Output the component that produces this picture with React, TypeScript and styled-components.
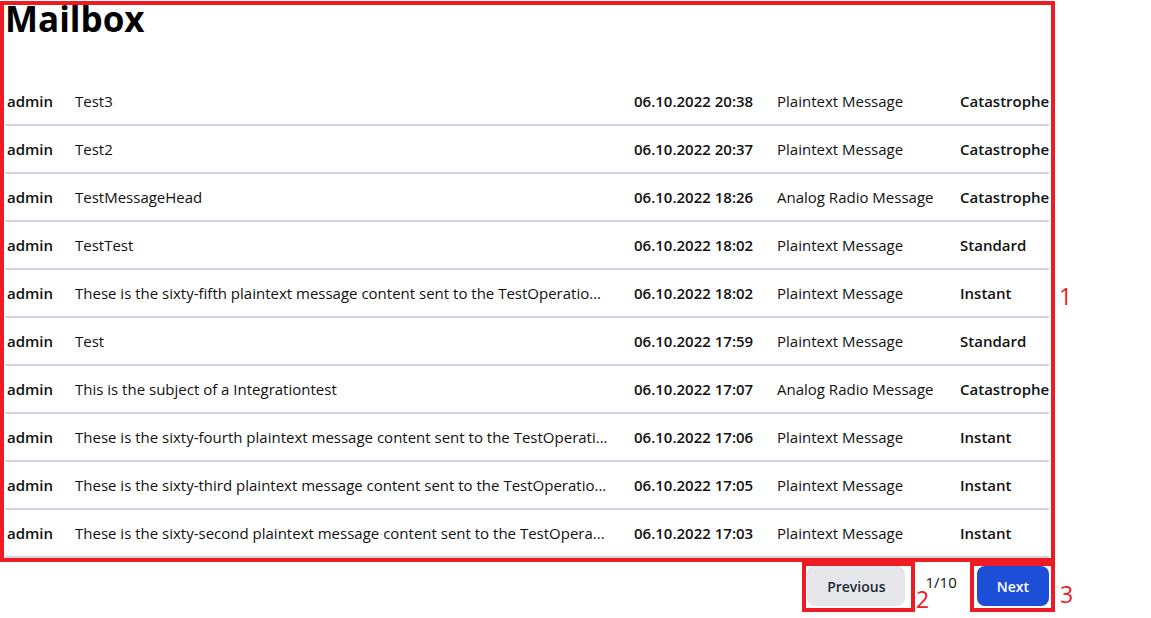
import React from "react";
import styled, { createGlobalStyle } from "styled-components";

const GlobalStyle = createGlobalStyle`
  html, body { margin: 0; padding: 0; background: #ffffff; }
  body { font-family: "Open Sans", "Noto Sans", "Liberation Sans", sans-serif; color: #000; }
`;

const Page = styled.div`
  position: relative;
  width: 1151px;
  height: 618px;
  overflow: hidden;
`;

const Container = styled.main`
  margin-left: 5px;
  width: 1044px;
  display: flex;
  flex-direction: column;
`;

const Title = styled.h1`
  margin: 0 0 40px 0;
  font-size: 35px;
  line-height: 38px;
  font-weight: 700;
  color: #000;
`;

const Table = styled.div`
  display: flex;
  flex-direction: column;
`;

const Row = styled.div`
  display: grid;
  grid-template-columns: 68px 559px 143px 183px 91px;
  height: 48px;
  box-sizing: border-box;
  border-bottom: 2px solid #d1d5db;
  align-items: center;
`;

const Cell = styled.div<{ $bold?: boolean }>`
  padding-left: 2px;
  font-size: 15px;
  line-height: 24px;
  font-weight: ${(p) => (p.$bold ? 600 : 400)};
  color: #111111;
  white-space: nowrap;
  overflow: hidden;
`;

const Pager = styled.div`
  display: flex;
  justify-content: flex-end;
  align-items: flex-start;
  gap: 20px;
  margin-top: 8px;
`;

const Button = styled.button<{ $primary?: boolean }>`
  height: 40px;
  padding: 0 20px;
  border: none;
  border-radius: 8px;
  font-family: inherit;
  font-size: 14px;
  font-weight: 600;
  background: ${(p) => (p.$primary ? "#1d4ed8" : "#e5e7eb")};
  color: ${(p) => (p.$primary ? "#ffffff" : "#1f2937")};
  cursor: pointer;
`;

const PageCount = styled.span`
  padding-top: 4px;
  font-size: 15px;
  line-height: 24px;
  color: #111111;
`;

const Mark = styled.div<{ $x: number; $y: number; $w: number; $h: number }>`
  position: absolute;
  left: ${(p) => p.$x}px;
  top: ${(p) => p.$y}px;
  width: ${(p) => p.$w}px;
  height: ${(p) => p.$h}px;
  box-sizing: border-box;
  border: 4px solid #ed1c24;
  pointer-events: none;
`;

const Label = styled.span<{ $x: number; $y: number }>`
  position: absolute;
  left: ${(p) => p.$x}px;
  top: ${(p) => p.$y}px;
  font-family: "Open Sans", "Liberation Sans", sans-serif;
  font-size: 23px;
  line-height: 24px;
  color: #ed1c24;
`;

type Msg = [string, string, string, string, string];

const rows: Msg[] = [
  ["admin", "Test3", "06.10.2022 20:38", "Plaintext Message", "Catastrophe"],
  ["admin", "Test2", "06.10.2022 20:37", "Plaintext Message", "Catastrophe"],
  ["admin", "TestMessageHead", "06.10.2022 18:26", "Analog Radio Message", "Catastrophe"],
  ["admin", "TestTest", "06.10.2022 18:02", "Plaintext Message", "Standard"],
  ["admin", "These is the sixty-fifth plaintext message content sent to the TestOperatio...", "06.10.2022 18:02", "Plaintext Message", "Instant"],
  ["admin", "Test", "06.10.2022 17:59", "Plaintext Message", "Standard"],
  ["admin", "This is the subject of a Integrationtest", "06.10.2022 17:07", "Analog Radio Message", "Catastrophe"],
  ["admin", "These is the sixty-fourth plaintext message content sent to the TestOperati...", "06.10.2022 17:06", "Plaintext Message", "Instant"],
  ["admin", "These is the sixty-third plaintext message content sent to the TestOperatio...", "06.10.2022 17:05", "Plaintext Message", "Instant"],
  ["admin", "These is the sixty-second plaintext message content sent to the TestOpera...", "06.10.2022 17:03", "Plaintext Message", "Instant"],
];

export default function App() {
  return (
    <Page>
      <GlobalStyle />
      <Container>
        <Title>Mailbox</Title>
        <Table>
          {rows.map((r, i) => (
            <Row key={i}>
              <Cell $bold>{r[0]}</Cell>
              <Cell>{r[1]}</Cell>
              <Cell $bold>{r[2]}</Cell>
              <Cell>{r[3]}</Cell>
              <Cell $bold>{r[4]}</Cell>
            </Row>
          ))}
        </Table>
        <Pager>
          <Button>Previous</Button>
          <PageCount>1/10</PageCount>
          <Button $primary>Next</Button>
        </Pager>
      </Container>
      <Mark $x={0} $y={1} $w={1055} $h={561} />
      <Mark $x={802} $y={562} $w={113} $h={50} />
      <Mark $x={970} $y={562} $w={85} $h={50} />
      <Label $x={1059} $y={284}>1</Label>
      <Label $x={916} $y={587}>2</Label>
      <Label $x={1060} $y={582}>3</Label>
    </Page>
  );
}
